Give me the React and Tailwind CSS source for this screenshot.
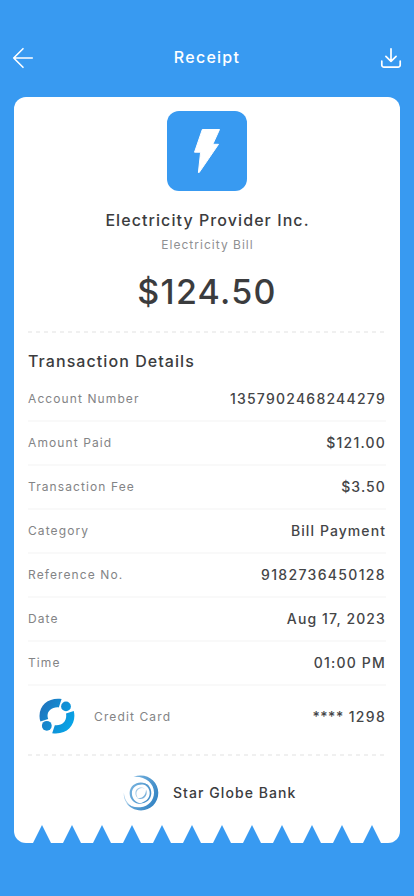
const details = [
  { label: 'Account Number', value: '1357902468244279', v: 'tracking-[1.24px]' },
  { label: 'Amount Paid', value: '$121.00', v: 'tracking-[1.2px]' },
  { label: 'Transaction Fee', value: '$3.50', v: 'tracking-[1.1px]' },
  { label: 'Category', value: 'Bill Payment', v: 'tracking-[1.08px]' },
  { label: 'Reference No.', value: '9182736450128', v: 'tracking-[1.34px]' },
  { label: 'Date', value: 'Aug 17, 2023', v: 'tracking-[1.12px]' },
  { label: 'Time', value: '01:00 PM', v: 'tracking-[1.2px]' },
];

function BackIcon() {
  return (
    <svg width="22" height="22" viewBox="0 0 22 22" fill="none" stroke="white" strokeWidth="1.6" strokeLinecap="round" strokeLinejoin="round">
      <path d="M11 1.7 1.7 11 11 20.3M1.7 11H20.3" />
    </svg>
  );
}

function DownloadIcon() {
  return (
    <svg width="22" height="22" viewBox="0 0 22 22" fill="none" stroke="white" strokeWidth="1.7" strokeLinecap="round" strokeLinejoin="round">
      <path d="M11 1.8V14.3M5.9 9.4 11 14.4 16.1 9.4M1.8 14V18A2.1 2.1 0 0 0 3.9 20.1H18.1A2.1 2.1 0 0 0 20.2 18V14" />
    </svg>
  );
}

function BoltIcon() {
  return (
    <svg width="80" height="80" viewBox="0 0 80 80" fill="white" stroke="white" strokeWidth="1" strokeLinejoin="round">
      <path d="M35.3 18.5H52.5L45.8 33.3H51.5L32.2 61.5H31.4L33.6 41.2H27.5Z" />
    </svg>
  );
}

function CardLogo() {
  return (
    <svg width="36" height="36" viewBox="0 0 36 36">
      <defs>
        <linearGradient id="cardBlue" gradientUnits="userSpaceOnUse" x1="2" y1="8" x2="34" y2="26">
          <stop offset="0" stopColor="#1f74bd" />
          <stop offset="1" stopColor="#06a5e8" />
        </linearGradient>
      </defs>
      <g fill="url(#cardBlue)">
        <path d="M22.6 .9C11 -.8 .6 5.5 .5 18Q.5 21 1.4 23.4L9.2 21C6.6 14.5 12 8.6 19.8 9.4Z" />
        <path d="M34.8 13C37.8 25.5 29 37.5 13.2 35.3L15.8 27.2C23.8 28.1 28.3 22.5 27 15.4Z" />
        <circle cx="27" cy="8.4" r="4.9" />
        <circle cx="7.8" cy="27.8" r="4.9" />
      </g>
    </svg>
  );
}

function BankLogo() {
  return (
    <svg width="36" height="36" viewBox="0 0 36 36">
      <defs>
        <linearGradient id="bankBlue" gradientUnits="userSpaceOnUse" x1="0" y1="8" x2="34" y2="24">
          <stop offset="0" stopColor="#86bde4" />
          <stop offset="1" stopColor="#3585c4" />
        </linearGradient>
      </defs>
      <g fill="url(#bankBlue)">
        <path d="M10.5 1.8C23-3 35.3 5.5 35.3 17.8C35.3 28 27.5 35.4 18 35.4C11.5 35.4 6.5 32.5 3.3 27.8C7.5 31.5 12 32.8 17.5 32.2C25.5 31.4 31 25.5 31 17.5C31 8 22 .8 10.5 1.8Z" />
        <path d="M.9 17.5C1.2 24.5 5 30 11.5 32.6C4.5 30.8 0 25 .9 17.5Z" opacity=".7" />
        <path d="M26.6 11.4C19 3.8 6.8 8.5 6.6 18C6.5 25 12.5 29.6 19 28.9C12.7 27.8 8.9 24 8.9 18C8.9 10.5 18 7 26.6 11.4Z" />
        <path d="M17 8.2C24 7.4 28.6 12.2 28.3 18.6C28 25 22.5 29.2 16 28.4C22.5 27.2 26.5 23.5 26.7 18.2C26.8 13 22.9 9.2 17 8.2Z" />
        <path d="M22 13.6C16.5 10.9 12.2 14 12.4 18.5C12.5 20.7 13.5 22.2 15 23C10.8 17.5 15.5 11 22 13.6Z" opacity=".6" />
        <path d="M23 14.5C25.6 20 20.5 26.3 14 23.2C19 23.8 23 20.5 23 14.5Z" opacity=".75" />
      </g>
    </svg>
  );
}

function DashedLine() {
  return <div className="h-0.5 w-[357px] shrink-0 bg-[repeating-linear-gradient(90deg,#f0f0f0_0_4px,transparent_4px_8px)]" />;
}

export default function App() {
  return (
    <div className="flex h-[896px] w-[414px] flex-col bg-[#389af1] font-['Inter',sans-serif] text-[#3b3c3e]">
      <header className="flex h-[97px] shrink-0 items-start justify-between px-3 pt-[47px]">
        <BackIcon />
        <h1 className="text-base leading-[21px] font-medium tracking-[1.25px] text-white">Receipt</h1>
        <DownloadIcon />
      </header>
      <main className="mx-3.5 flex h-[746px] flex-col overflow-hidden rounded-xl bg-white px-3.5 pt-3.5">
        <section className="flex h-[220px] shrink-0 flex-col items-center whitespace-nowrap">
          <div className="size-20 rounded-xl bg-[#389af1]">
            <BoltIcon />
          </div>
          <h2 className="mt-[17px] pl-px text-base leading-6 font-medium tracking-[1.08px]">Electricity Provider Inc.</h2>
          <p className="mt-[5px] pl-px text-xs leading-4 tracking-[1.02px] text-[#8f9092]">Electricity Bill</p>
          <p className="mt-[19px] text-[34px] leading-10 font-medium tracking-[1.25px]">$124.50</p>
        </section>
        <DashedLine />
        <h3 className="mt-4 h-[29px] shrink-0 text-base leading-6 font-medium tracking-[1.07px]">Transaction Details</h3>
        <dl className="shrink-0">
          {details.map((d) => (
            <div key={d.label} className="flex h-11 items-center justify-between border-b-2 border-[#f9f9f9]">
              <dt className="text-xs tracking-[1.1px] text-[#838486]">{d.label}</dt>
              <dd className={`text-sm font-medium text-[#444547] ${d.v}`}>{d.value}</dd>
            </div>
          ))}
        </dl>
        <div className="flex h-[68px] shrink-0 items-center pb-2 pl-[11px]">
          <CardLogo />
          <span className="ml-[19px] pt-0.5 text-xs tracking-[1.12px] text-[#838486]">Credit Card</span>
          <span className="ml-auto pt-0.5 text-sm font-medium tracking-[1.3px] text-[#444547]">
            <span className="tracking-[0.5px]">****</span> 1298
          </span>
        </div>
        <DashedLine />
        <footer className="flex h-[69px] shrink-0 items-center pt-1 pl-[95px]">
          <BankLogo />
          <span className="ml-3.5 text-sm font-medium tracking-[1.07px]">Star Globe Bank</span>
        </footer>
        <div className="-mr-3.5 flex shrink-0 gap-3 pl-[5px]">
          {Array.from({ length: 12 }, (_, i) => (
            <div key={i} className="h-[18px] w-[18px] shrink-0 bg-[#389af1] [clip-path:polygon(50%_0,100%_100%,0_100%)]" />
          ))}
        </div>
      </main>
    </div>
  );
}
